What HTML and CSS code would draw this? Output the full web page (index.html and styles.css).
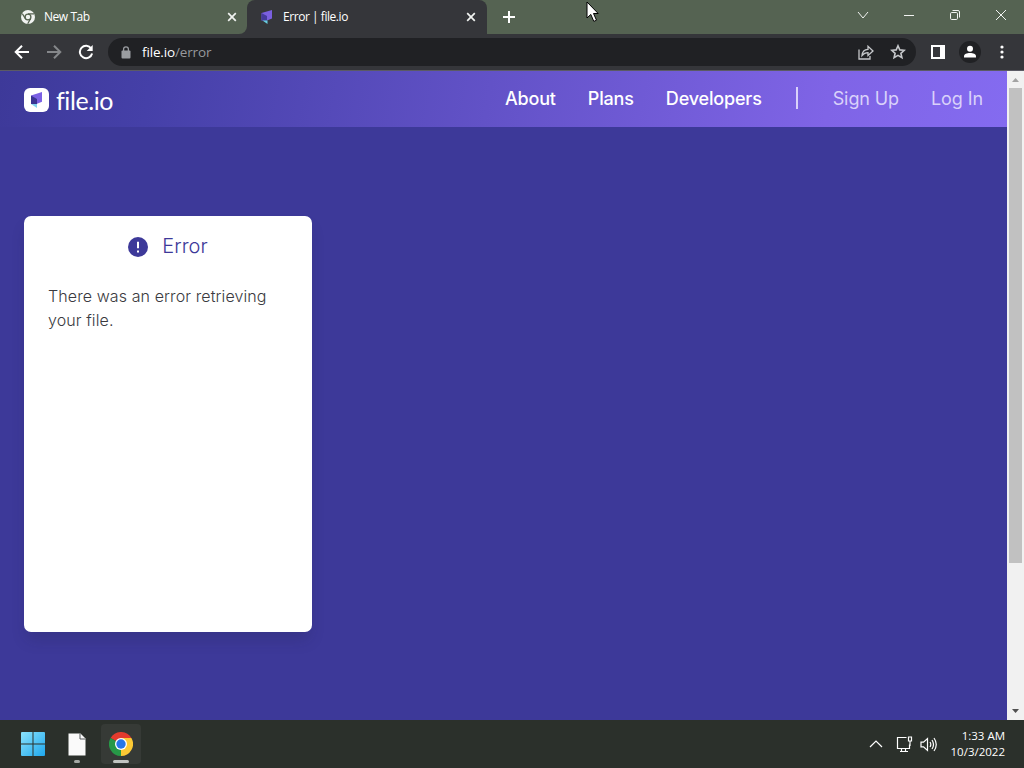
FILE: index.html
```html
<!DOCTYPE html>
<html lang="en">
<head>
    <meta charset="UTF-8">
    <meta name="viewport" content="width=device-width, initial-scale=1.0">
    <title>Error | file.io</title>
    <link rel="stylesheet" href="styles.css">
</head>
<body>
    <div class="tab-strip">
        <div class="tab">
            <svg class="tab-icon" width="14" height="14" viewBox="0 0 14 14">
                <circle cx="7" cy="7" r="7" fill="#f1f3f1"/>
                <circle cx="7" cy="7" r="2.9" fill="none" stroke="#55624f" stroke-width="1.3"/>
                <path d="M7 3.9h6M4.4 8.6L1.3 3.6M9.6 8.6L6.7 13.8" stroke="#55624f" stroke-width="1.2"/>
            </svg>
            <span class="tab-title">New Tab</span>
            <svg class="tab-close" width="10" height="10" viewBox="0 0 10 10"><path d="M1.2 1.2l7.6 7.6M8.8 1.2L1.2 8.8"/></svg>
        </div>
        <div class="tab active">
            <svg class="tab-icon" width="14" height="16" viewBox="0 0 14 16">
                <path d="M1.500 4L12 1v8.500L7 11.500H1.500z" fill="#7a5fe0"/>
                <path d="M1.500 4l5.500 3v4.500H1.500z" fill="#443a9c"/>
                <path d="M2.500 11.500H7.500V15z" fill="#67cfe0"/>
            </svg>
            <span class="tab-title">Error | file.io</span>
            <svg class="tab-close" width="10" height="10" viewBox="0 0 10 10"><path d="M1.2 1.2l7.6 7.6M8.8 1.2L1.2 8.8"/></svg>
        </div>
        <svg class="new-tab" width="12" height="12" viewBox="0 0 12 12"><path d="M6 0v12M0 6h12"/></svg>
        <div class="window-controls">
            <span><svg width="12" height="12" viewBox="0 0 12 12"><path d="M1 3l5 6 5-6"/></svg></span>
            <span><svg width="12" height="12" viewBox="0 0 12 12"><path d="M1 6.500h10"/></svg></span>
            <span><svg width="12" height="12" viewBox="0 0 12 12"><rect x="1.500" y="3.500" width="7" height="7" rx="1.200"/><path d="M3.500 1.500H9a1.500 1.500 0 0 1 1.500 1.500v5.500"/></svg></span>
            <span><svg width="12" height="12" viewBox="0 0 12 12"><path d="M1 1l10 10M11 1L1 11"/></svg></span>
        </div>
    </div>

    <div class="toolbar">
        <svg class="nav-icon" width="16" height="16" viewBox="0 0 16 16"><path d="M15 8H2M8 1.700L1.700 8 8 14.300"/></svg>
        <svg class="nav-icon disabled" width="16" height="16" viewBox="0 0 16 16"><path d="M1 8h13M8 1.700L14.300 8 8 14.300"/></svg>
        <svg class="nav-icon" width="16" height="16" viewBox="0 0 16 16"><path d="M13.200 4.500A6.200 6.200 0 1 0 14.100 9.500"/><path d="M14.700 1v6h-6z" fill="#fff" stroke="none"/></svg>
        <div class="address-bar">
            <svg class="lock" width="10" height="13" viewBox="0 0 10 13">
                <rect x="0.500" y="4.500" width="9" height="8" rx="1" fill="#9a9da1"/>
                <path d="M2.600 5V3.200a2.400 2.400 0 0 1 4.800 0V5" fill="none" stroke="#9a9da1" stroke-width="1.300"/>
            </svg>
            <span class="url">file.io<span class="path">/error</span></span>
            <svg class="share" width="16" height="15" viewBox="0 0 16 15"><path d="M1 4.500v9.500h11v-3M4 10.500c.3-4 2.300-6 6-6.200V1.300L15 6l-5 4.500V7.600c-2.700 0-4.500 1-6 2.900z"/></svg>
            <svg class="star" width="16" height="16" viewBox="0 0 16 16"><path d="M8 1.800l1.800 4.100 4.500.4-3.400 3 1 4.400L8 11.400l-3.900 2.300 1-4.400-3.400-3 4.500-.4z"/></svg>
        </div>
        <svg class="side-panel" width="14" height="14" viewBox="0 0 14 14"><path d="M1 1h12v12H1z" fill="none" stroke="#fff" stroke-width="2"/><path d="M9 1h4v12H9z" fill="#fff"/></svg>
        <svg class="profile" width="22" height="22" viewBox="0 0 22 22"><circle cx="11" cy="11" r="11" fill="#202124"/><circle cx="11" cy="7.800" r="3" fill="#fff"/><path d="M5 16.500v-1.300c0-2 2.800-3.200 6-3.200s6 1.200 6 3.200v1.300z" fill="#fff"/></svg>
        <svg class="more" width="4" height="14" viewBox="0 0 4 14"><circle cx="2" cy="2" r="1.600"/><circle cx="2" cy="7" r="1.600"/><circle cx="2" cy="12" r="1.600"/></svg>
    </div>

    <div class="viewport">
        <div class="page">
            <header class="site-header">
                <div class="logo">
                    <svg width="25" height="24" viewBox="0 0 25 24">
                        <rect width="25" height="24" rx="6" fill="#fff"/>
                        <path d="M7 7.500L18 4v9.800L12.500 16z" fill="#7b61e4"/>
                        <path d="M7 7.500l6 3.500v5H7z" fill="#3a3493"/>
                        <path d="M7 16h6v4z" fill="#83d2ee"/>
                    </svg>
                    <span class="logo-text">file.io</span>
                </div>
                <nav class="menu">
                    <a>About</a>
                    <a>Plans</a>
                    <a>Developers</a>
                    <span class="divider"></span>
                    <a class="light">Sign Up</a>
                    <a class="light">Log In</a>
                </nav>
            </header>
            <main class="content">
                <div class="card">
                    <h1>
                        <svg width="20" height="20" viewBox="0 0 20 20"><circle cx="10" cy="10" r="10" fill="#3d3999"/><path d="M10 4.800v6.400M10 13.400v2.200" stroke="#fff" stroke-width="2"/></svg>
                        Error
                    </h1>
                    <p>There was an error retrieving your file.</p>
                </div>
            </main>
        </div>
        <div class="scrollbar">
            <svg width="7" height="4" viewBox="0 0 7 4"><path d="M0 4l3.500-4L7 4z" fill="#a3a3a3"/></svg>
            <div class="thumb"></div>
            <svg class="down" width="7" height="4" viewBox="0 0 7 4"><path d="M0 0h7L3.500 4z" fill="#505050"/></svg>
        </div>
    </div>

    <div class="taskbar">
        <div class="apps">
            <div class="app">
                <svg width="24" height="24" viewBox="0 0 24 24">
                    <defs>
                        <linearGradient id="win" gradientUnits="userSpaceOnUse" x1="0" y1="0" x2="24" y2="24"><stop offset="0" stop-color="#8be2fc"/><stop offset="1" stop-color="#1ea7ee"/></linearGradient>
                    </defs>
                    <path d="M0 1q0-1 1-1h10.500v11.500H0zM12.500 0H23q1 0 1 1v10.500H12.500zM0 12.500h11.500V24H1q-1 0-1-1zM12.500 12.500H24V23q0 1-1 1H12.500z" fill="url(#win)"/>
                </svg>
            </div>
            <div class="app">
                <svg width="18" height="23" viewBox="0 0 18 23"><path d="M0.500 0.500h12l5 5v17h-17z" fill="#fafafa"/><path d="M12 .5v5.500h5.500" fill="none" stroke="#55595a"/></svg>
                <span class="running"></span>
            </div>
            <div class="app current">
                <svg width="24" height="24" viewBox="0 0 24 24">
                    <path d="M12 12L1.600 6A12 12 0 0 1 22.400 6z" fill="#e33b2e"/>
                    <path d="M12 12l10.400-6A12 12 0 0 1 12 24z" fill="#fcc934"/>
                    <path d="M12 12v12A12 12 0 0 1 1.600 6z" fill="#279847"/>
                    <path d="M12 6h10.400L17.200 15 12 24l5-9z" fill="#fcc934"/>
                    <path d="M1.600 6L6.800 15 12 18l-2 5.800z" fill="#279847"/>
                    <circle cx="12" cy="12" r="6" fill="#fff"/>
                    <circle cx="12" cy="12" r="4.700" fill="#2676e8"/>
                </svg>
                <span class="running"></span>
            </div>
        </div>
        <div class="tray">
            <svg width="14" height="8" viewBox="0 0 14 8"><path d="M1 7l6-6 6 6"/></svg>
            <svg class="network" width="17" height="17" viewBox="0 0 17 17"><path d="M10.500 1.500h-9v11h12v-4M4 15.500h8M5.500 12.500v3M9.500 12.500v3M12.500 1h3v4h-3zM14 5v5"/></svg>
            <svg class="volume" width="17" height="15" viewBox="0 0 17 15"><path d="M1 5.200h2.500L7.500 1.500v12l-4-3.700H1zM10 5q1.600 2.500 0 5M12 3q3 4.500 0 9M14 1q4.500 6.500 0 13"/></svg>
            <div class="clock">
                <div>1:33 AM</div>
                <div>10/3/2022</div>
            </div>
        </div>
    </div>

    <svg class="cursor" width="13" height="22" viewBox="0 0 13 22"><path d="M1 1v16l3.800-3.600 3 7 2.700-1.200-3-6.700h4.700z" fill="#fff" stroke="#000"/></svg>
</body>
</html>
```

FILE: styles.css
```css
* {
    box-sizing: border-box;
}

body {
    margin: 0;
    width: 1024px;
    height: 768px;
    overflow: hidden;
    display: flex;
    flex-direction: column;
    font-family: Inter, sans-serif;
}

svg {
    flex-shrink: 0;
}

/* Browser tabs */
.tab-strip {
    height: 34px;
    display: flex;
    background-color: #556352;
    background-image: linear-gradient(#35363a, #35363a);
    background-size: 487px 34px;
    background-repeat: no-repeat;
}

.tab {
    width: 247px;
    height: 34px;
    display: flex;
    align-items: center;
    padding: 0 10px 0 21px;
    background-color: #556352;
    border-radius: 0 0 8px 0;
    color: #fff;
    font-family: "Open Sans", sans-serif;
    font-size: 12px;
}

.tab.active {
    width: 240px;
    padding: 0 11px 0 13px;
    background-color: #35363a;
    border-radius: 8px 8px 0 0;
    box-shadow: 0 -8px 0 #556352;
}

.tab-title {
    margin-left: 9px;
    padding-bottom: 1px;
    flex: 1;
    letter-spacing: -0.45px;
}

.tab-close {
    fill: none;
    stroke: #f1f3f1;
    stroke-width: 1.7;
}

.new-tab {
    margin: 11px 0 0 16px;
    stroke: #fff;
    stroke-width: 2;
}

.window-controls {
    margin-left: auto;
    display: flex;
    height: 29px;
}

.window-controls span {
    width: 46px;
    display: flex;
    align-items: center;
    justify-content: center;
}

.window-controls svg {
    fill: none;
    stroke: #f1f3f1;
}

/* Browser toolbar */
.toolbar {
    height: 37px;
    display: flex;
    align-items: center;
    padding: 0 20px 0 14px;
    background-color: #35363a;
    border-bottom: 1px solid #5b5a64;
}

.nav-icon {
    margin-right: 16px;
    fill: none;
    stroke: #fff;
    stroke-width: 2;
}

.nav-icon.disabled {
    stroke: #85878a;
}

.address-bar {
    width: 808px;
    height: 28px;
    margin-left: -2px;
    display: flex;
    align-items: center;
    padding: 0 10px 0 13px;
    background-color: #202124;
    border-radius: 14px;
}

.url {
    flex: 1;
    margin-left: 11px;
    color: #fff;
    font-family: "Open Sans", sans-serif;
    font-size: 13.5px;
    letter-spacing: -0.15px;
}

.url .path {
    color: #97999d;
}

.share,
.star {
    fill: none;
    stroke: #c6c8cb;
    stroke-width: 1.3;
}

.star {
    margin-left: 16px;
    stroke-width: 1.6;
}

.side-panel {
    margin-left: 15px;
}

.profile {
    margin-left: 14px;
}

.more {
    margin-left: 19px;
    fill: #fff;
}

/* Page */
.viewport {
    height: 649px;
    display: flex;
}

.page {
    width: 1007px;
    background-color: #3d3999;
}

.site-header {
    height: 56px;
    display: flex;
    align-items: center;
    justify-content: space-between;
    padding: 0 24px;
    background: linear-gradient(100deg, #3d3999 0%, #4540a8 15%, #7f64e6 82%, #846bf0 100%);
}

.logo {
    display: flex;
    align-items: center;
    padding-top: 2px;
}

.logo-text {
    margin-left: 7px;
    color: #fff;
    font-family: Lato, sans-serif;
    font-size: 25px;
    line-height: 24px;
    letter-spacing: -0.4px;
}

.menu {
    display: flex;
    align-items: center;
    gap: 32px;
    padding-bottom: 2px;
    color: #fff;
    font-size: 18px;
    font-weight: 500;
    letter-spacing: -0.17px;
}

.menu .light {
    color: #d9d1fa;
    font-weight: 400;
    letter-spacing: -0.1px;
}

.divider {
    width: 2px;
    height: 22px;
    margin: 0 3px 0 2px;
    background-color: #d9d1fa;
}

.content {
    padding: 89px 24px;
}

.card {
    width: 288px;
    height: 416px;
    padding: 15px 24px;
    background-color: #fff;
    border-radius: 7px;
    box-shadow: 0 10px 16px -3px rgba(30, 30, 60, 0.2);
}

.card h1 {
    margin: 0;
    display: flex;
    align-items: center;
    justify-content: center;
    gap: 14px;
    color: #3d3999;
    font-size: 20px;
    font-weight: 300;
    line-height: 30px;
    letter-spacing: 0.1px;
}

.card h1 svg {
    margin-top: 2px;
}

.card p {
    margin: 23px 0 0;
    color: #3a3a40;
    font-size: 16px;
    font-weight: 300;
    line-height: 24px;
    letter-spacing: 0.1px;
}

.scrollbar {
    width: 17px;
    display: flex;
    flex-direction: column;
    align-items: center;
    padding: 7px 0 7px;
    background-color: #f1f1f1;
}

.thumb {
    width: 13px;
    height: 475px;
    margin-top: 6px;
    background-color: #c1c1c1;
}

.scrollbar .down {
    margin-top: auto;
}

/* Taskbar */
.taskbar {
    height: 48px;
    display: flex;
    justify-content: space-between;
    padding: 0 19px 0 13px;
    background-color: #2b302b;
    color: #fff;
}

.apps {
    display: flex;
    align-items: center;
    gap: 4px;
}

.app {
    position: relative;
    width: 40px;
    height: 40px;
    display: flex;
    align-items: center;
    justify-content: center;
    border-radius: 4px;
}

.app.current {
    background-color: #363a36;
}

.running {
    position: absolute;
    bottom: 1px;
    width: 6px;
    height: 3px;
    border-radius: 2px;
    background-color: #a5a8a5;
}

.current .running {
    width: 16px;
    background-color: #c1c4c1;
}

.tray {
    display: flex;
    align-items: center;
}

.tray svg {
    fill: none;
    stroke: #fff;
    stroke-width: 1.2;
}

.tray .network {
    margin-left: 13px;
}

.tray .volume {
    margin-left: 7px;
}

.clock {
    margin-left: 14px;
    text-align: right;
    font-family: "Open Sans", sans-serif;
    font-size: 11.5px;
    line-height: 16px;
}

.cursor {
    position: absolute;
    left: 586px;
    top: 1px;
}
```
